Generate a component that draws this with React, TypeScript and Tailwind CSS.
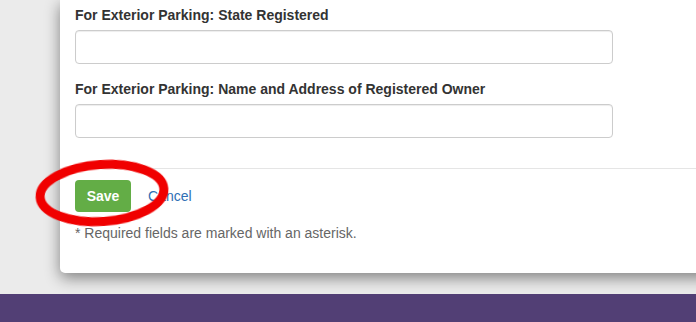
import React from "react";

export default function App() {
  return (
    <div
      className="w-[696px] h-[322px] flex flex-col overflow-hidden bg-[#ebebeb]"
      style={{ fontFamily: '"Liberation Sans", Arial, sans-serif' }}
    >
      <div className="h-[294px] pl-[60px] relative">
        <div className="w-[680px] h-[273px] bg-white rounded-b-[5px] shadow-[0_5px_15px_rgba(0,0,0,0.45)] flex flex-col">
          <div className="px-[15px] pt-[5px]">
            <label className="block text-[14px] leading-[20px] font-bold text-[#333] mb-[5px]">
              For Exterior Parking: State Registered
            </label>
            <input
              className="block w-[538px] h-[34px] border border-[#ccc] rounded-[4px] shadow-[inset_0_1px_1px_rgba(0,0,0,0.075)] bg-white outline-none"
              type="text"
            />
            <label className="block text-[14px] leading-[20px] font-bold text-[#333] mt-[15px] mb-[5px]">
              For Exterior Parking: Name and Address of Registered Owner
            </label>
            <input
              className="block w-[538px] h-[34px] border border-[#ccc] rounded-[4px] shadow-[inset_0_1px_1px_rgba(0,0,0,0.075)] bg-white outline-none"
              type="text"
            />
          </div>
          <div className="mt-[30px] border-t border-[#e5e5e5] px-[15px] pt-[11px]">
            <div className="flex items-center gap-[17px]">
              <button className="w-[56px] h-[32px] rounded-[4px] bg-[#63ad46] text-white font-bold text-[14px] leading-[20px]">
                Save
              </button>
              <a className="text-[14px] leading-[20px] text-[#2f6fb5]">Cancel</a>
            </div>
            <p className="mt-[11px] text-[14px] leading-[20px] text-[#666]">
              * Required fields are marked with an asterisk.
            </p>
          </div>
        </div>
        <svg
          className="absolute left-[30px] top-[156px] pointer-events-none"
          width="146"
          height="76"
          viewBox="0 0 146 76"
        >
          <defs>
            <filter id="soft" x="-10%" y="-10%" width="120%" height="120%">
              <feGaussianBlur stdDeviation="0.6" />
            </filter>
          </defs>
          <ellipse
            cx="72"
            cy="37"
            rx="62"
            ry="28.5"
            fill="none"
            stroke="#f00000"
            strokeWidth="9"
            transform="rotate(-4 72 37)"
            filter="url(#soft)"
          />
        </svg>
      </div>
      <div className="h-[28px] bg-[#523f75] relative z-10" />
    </div>
  );
}
